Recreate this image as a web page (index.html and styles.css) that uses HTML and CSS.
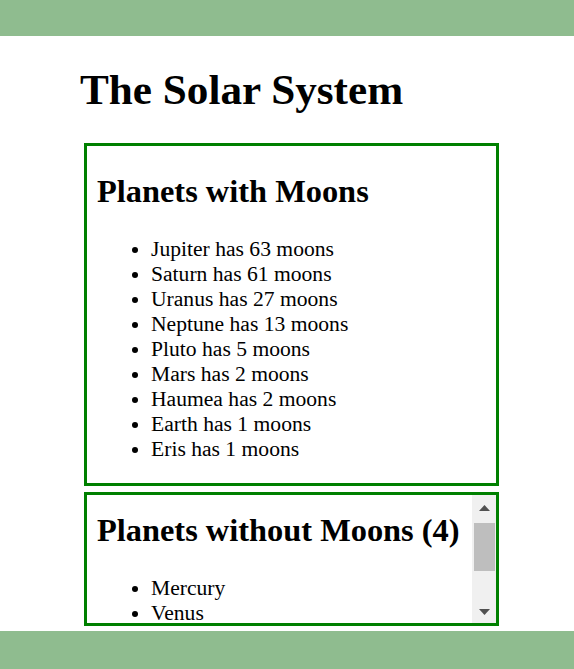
FILE: index.html
```html
<!DOCTYPE html>
<html lang="en">
<head>
<meta charset="utf-8">
<title>The Solar System</title>
<link rel="stylesheet" href="styles.css">
</head>
<body>
<header class="topbar"></header>
<main class="page">
  <h1 class="title">The Solar System</h1>
  <section class="box box-moons">
    <h2 class="box-title">Planets with Moons</h2>
    <ul class="list">
      <li>Jupiter has 63 moons</li>
      <li>Saturn has 61 moons</li>
      <li>Uranus has 27 moons</li>
      <li>Neptune has 13 moons</li>
      <li>Pluto has 5 moons</li>
      <li>Mars has 2 moons</li>
      <li>Haumea has 2 moons</li>
      <li>Earth has 1 moons</li>
      <li>Eris has 1 moons</li>
    </ul>
  </section>
  <section class="box box-nomoons">
    <div class="scroll-content" id="nomoons">
      <h2 class="box-title">Planets without Moons (4)</h2>
      <ul class="list">
        <li>Mercury</li>
        <li>Venus</li>
        <li>Ceres</li>
        <li>Makemake</li>
      </ul>
    </div>
    <div class="scrollbar" aria-hidden="true">
      <svg class="sb-arrow sb-up" width="11" height="6" viewBox="0 0 11 6"><polygon points="0,6 5.5,0 11,6" fill="#505050"/></svg>
      <div class="sb-thumb"></div>
      <svg class="sb-arrow sb-down" width="11" height="6" viewBox="0 0 11 6"><polygon points="0,0 11,0 5.5,6" fill="#505050"/></svg>
    </div>
  </section>
</main>
<footer class="bottombar"></footer>
<script src="script.js"></script>
</body>
</html>
```
FILE: styles.css
```css
html {
  font-size: 21.6px;
}
body {
  margin: 0;
  height: 100vh;
  display: flex;
  flex-direction: column;
  font-family: "Liberation Serif", "Times New Roman", serif;
  color: #000;
  background: #fff;
  overflow: hidden;
}
.topbar {
  flex: 0 0 36px;
  background: #8fbc8f;
}
.bottombar {
  flex: 0 0 38px;
  background: #8fbc8f;
}
.page {
  flex: 1 1 auto;
  min-height: 0;
  display: flex;
  flex-direction: column;
  margin-left: 80px;
  width: 419px;
}
.title {
  font-size: 2em;
  font-weight: bold;
  margin: 0.67em 0;
  line-height: normal;
}
.box {
  margin-left: 4px;
  border: 3px solid #008000;
}
.box-moons {
  flex: 0 0 auto;
  padding: 0 10px;
}
.box-nomoons {
  flex: 1 1 auto;
  min-height: 0;
  margin-top: 6px;
  margin-bottom: 5px;
  display: flex;
  flex-direction: row;
  overflow: hidden;
}
.scroll-content {
  flex: 1 1 auto;
  min-width: 0;
  overflow: hidden;
  padding: 0 10px;
}
.box-title {
  font-size: 1.5em;
  font-weight: bold;
  margin: 0.83em 0;
  white-space: nowrap;
}
.list {
  margin: 1em 0;
  padding-left: 54px;
}
.list li {
  line-height: normal;
}
.scrollbar {
  flex: 0 0 24px;
  background: #f0f0f0;
  display: flex;
  flex-direction: column;
  align-items: center;
}
.sb-arrow {
  display: block;
  flex: 0 0 auto;
}
.sb-up {
  margin-top: 10px;
}
.sb-thumb {
  align-self: flex-start;
  margin-top: 12px;
  margin-left: 2px;
  width: 21px;
  height: 48px;
  background: #bebebe;
}
.sb-down {
  margin-top: auto;
  margin-bottom: 8px;
}
```
FILE: script.js
```js
document.getElementById('nomoons').scrollTop = 10;
```
